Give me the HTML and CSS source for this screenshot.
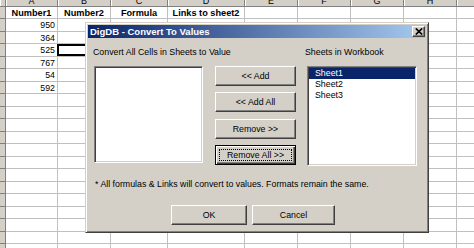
FILE: index.html
```html
<!DOCTYPE html>
<html>
<head>
<meta charset="utf-8">
<link rel="stylesheet" href="styles.css">
</head>
<body>
<div class="sheet">
  <div class="row hdr"><b class="rh"></b><b>A</b><b>B</b><b>C</b><b>D</b><b>E</b><b>F</b><b>G</b><b>H</b><b>I</b></div>
  <div class="row"><b class="rh"></b><span class="th">Number1</span><span class="th">Number2</span><span class="th">Formula</span><span class="th">Links to sheet2</span><span></span><span></span><span></span><span></span><span></span></div>
  <div class="row"><b class="rh"></b><span class="num">950</span><span></span><span></span><span></span><span></span><span></span><span></span><span></span><span></span></div>
  <div class="row"><b class="rh"></b><span class="num">364</span><span></span><span></span><span></span><span></span><span></span><span></span><span></span><span></span></div>
  <div class="row"><b class="rh"></b><span class="num">525</span><span class="active"></span><span></span><span></span><span></span><span></span><span></span><span></span><span></span></div>
  <div class="row"><b class="rh"></b><span class="num">767</span><span></span><span></span><span></span><span></span><span></span><span></span><span></span><span></span></div>
  <div class="row"><b class="rh"></b><span class="num">54</span><span></span><span></span><span></span><span></span><span></span><span></span><span></span><span></span></div>
  <div class="row"><b class="rh"></b><span class="num">592</span><span></span><span></span><span></span><span></span><span></span><span></span><span></span><span></span></div>
  <div class="row"><b class="rh"></b><span></span><span></span><span></span><span></span><span></span><span></span><span></span><span></span><span></span></div>
  <div class="row"><b class="rh"></b><span></span><span></span><span></span><span></span><span></span><span></span><span></span><span></span><span></span></div>
  <div class="row"><b class="rh"></b><span></span><span></span><span></span><span></span><span></span><span></span><span></span><span></span><span></span></div>
  <div class="row"><b class="rh"></b><span></span><span></span><span></span><span></span><span></span><span></span><span></span><span></span><span></span></div>
  <div class="row"><b class="rh"></b><span></span><span></span><span></span><span></span><span></span><span></span><span></span><span></span><span></span></div>
  <div class="row"><b class="rh"></b><span></span><span></span><span></span><span></span><span></span><span></span><span></span><span></span><span></span></div>
  <div class="row"><b class="rh"></b><span></span><span></span><span></span><span></span><span></span><span></span><span></span><span></span><span></span></div>
  <div class="row"><b class="rh"></b><span></span><span></span><span></span><span></span><span></span><span></span><span></span><span></span><span></span></div>
  <div class="row"><b class="rh"></b><span></span><span></span><span></span><span></span><span></span><span></span><span></span><span></span><span></span></div>
  <div class="row"><b class="rh"></b><span></span><span></span><span></span><span></span><span></span><span></span><span></span><span></span><span></span></div>
  <div class="row"><b class="rh"></b><span></span><span></span><span></span><span></span><span></span><span></span><span></span><span></span><span></span></div>
  <div class="row"><b class="rh"></b><span></span><span></span><span></span><span></span><span></span><span></span><span></span><span></span><span></span></div>
  <div class="row"><b class="rh"></b><span></span><span></span><span></span><span></span><span></span><span></span><span></span><span></span><span></span></div>
</div>

<div class="dialog">
  <div class="titlebar">
    <span class="title">DigDB - Convert To Values</span>
    <span class="close"><svg width="8" height="7" viewBox="0 0 8 7"><path d="M0.8 0.5 L7.2 6.5 M7.2 0.5 L0.8 6.5" stroke="#000" stroke-width="1.7" fill="none"/></svg></span>
  </div>
  <div class="body">
    <div class="columns">
      <div class="col-left">
        <div class="label">Convert All Cells in Sheets to Value</div>
        <div class="listbox list-left"></div>
      </div>
      <div class="col-mid">
        <div class="btn">&lt;&lt; Add</div>
        <div class="btn">&lt;&lt; Add All</div>
        <div class="btn">Remove &gt;&gt;</div>
        <div class="btn focus"><span class="focus-rect">Remove All &gt;&gt;</span></div>
      </div>
      <div class="col-right">
        <div class="label">Sheets in Workbook</div>
        <div class="listbox list-right">
          <div class="item selected">Sheet1</div>
          <div class="item">Sheet2</div>
          <div class="item">Sheet3</div>
        </div>
      </div>
    </div>
    <div class="note">* All formulas &amp; Links will convert to values. Formats remain the same.</div>
    <div class="actions">
      <div class="btn btn-ok">OK</div>
      <div class="btn btn-cancel">Cancel</div>
    </div>
  </div>
</div>
</body>
</html>
```

FILE: styles.css
```css
html, body {
  margin: 0;
  padding: 0;
  width: 474px;
  height: 248px;
  overflow: hidden;
  background: #ffffff;
  font-family: "Liberation Sans", Arial, sans-serif;
  color: #000;
}

.sheet {
  position: relative;
  width: 474px;
  height: 248px;
  overflow: hidden;
}

.row {
  display: grid;
  grid-template-columns: 6px 52px 53px 57px 77px 53px 53px 53px 53px 60px;
  height: 12.5px;
}

.row > span {
  box-sizing: border-box;
  border-right: 1px solid #c0c0c0;
  border-bottom: 1px solid #c0c0c0;
  font-size: 8.8px;
  line-height: 12px;
  white-space: nowrap;
  overflow: hidden;
}

.row > .rh {
  box-sizing: border-box;
  background: #d4d0c8;
  border-right: 1px solid #808080;
  border-bottom: 1px solid #808080;
}

.hdr {
  height: 6.5px;
}

.hdr > b {
  box-sizing: border-box;
  background: #d4d0c8;
  border-right: 1px solid #808080;
  border-bottom: 1px solid #808080;
  box-shadow: inset 1px 0 #ffffff;
  font-weight: normal;
  font-size: 9px;
  line-height: 9px;
  text-align: center;
  overflow: hidden;
  padding-top: 0;
}

.hdr > b:not(.rh) {
  line-height: 2px;
}

.th {
  font-weight: bold;
  font-size: 9.2px !important;
  text-align: center;
}

.num {
  text-align: right;
  padding-right: 2px;
}

.active {
  box-shadow: inset 0 0 0 2px #000;
  margin-left: -1px;
}

/* Dialog */
.dialog {
  position: absolute;
  left: 85px;
  top: 22px;
  width: 344px;
  height: 211px;
  box-sizing: border-box;
  background: #d4d0c8;
  border: 1px solid;
  border-color: #d4d0c8 #404040 #404040 #d4d0c8;
  box-shadow: inset 1px 1px #ffffff, inset -1px -1px #808080;
  padding: 2px;
  display: flex;
  flex-direction: column;
}

.titlebar {
  height: 13px;
  background: linear-gradient(to right, #0a246a, #a6caf0);
  display: flex;
  align-items: center;
  justify-content: space-between;
  padding: 0 1px 0 2px;
}

.title {
  color: #ffffff;
  font-weight: bold;
  font-size: 9.5px;
  line-height: 13px;
  white-space: nowrap;
}

.close {
  width: 13px;
  height: 11px;
  box-sizing: border-box;
  background: #d4d0c8;
  border: 1px solid;
  border-color: #ffffff #404040 #404040 #ffffff;
  box-shadow: inset -1px -1px #808080;
  display: flex;
  align-items: center;
  justify-content: center;
}

.close svg {
  display: block;
}

.body {
  padding: 8.5px 0 0 5px;
  font-size: 8.8px;
}

.columns {
  display: flex;
  align-items: flex-start;
}

.col-left {
  width: 111px;
  margin-right: 11px;
}

.col-mid {
  width: 81px;
  margin-right: 9px;
  padding-top: 19.5px;
  display: flex;
  flex-direction: column;
  gap: 6.33px;
}

.col-right {
  width: 112px;
}

.label {
  line-height: 11px;
  height: 11px;
  margin-bottom: 8.5px;
  white-space: nowrap;
}

.listbox {
  box-sizing: border-box;
  background: #ffffff;
  border: 1px solid;
  border-color: #808080 #ffffff #ffffff #808080;
  box-shadow: inset 1px 1px #404040, inset -1px -1px #d4d0c8;
  padding: 1px;
}

.list-left {
  margin-left: 1px;
  width: 109px;
  height: 97px;
}

.list-right {
  margin-left: 2px;
  width: 110px;
  height: 100px;
}

.item {
  line-height: 11px;
  height: 11px;
  padding-left: 6px;
  white-space: nowrap;
}

.item.selected {
  background: #0a246a;
  color: #ffffff;
}

.btn {
  box-sizing: border-box;
  height: 20px;
  background: #d4d0c8;
  border: 1px solid;
  border-color: #ffffff #404040 #404040 #ffffff;
  box-shadow: inset -1px -1px #808080;
  display: flex;
  align-items: center;
  justify-content: center;
  font-size: 8.8px;
  white-space: nowrap;
}

.btn.focus {
  border-color: #000000;
  box-shadow: inset 1px 1px #ffffff, inset -1px -1px #404040, inset -2px -2px #808080;
  padding: 3px;
  align-items: stretch;
}

.focus-rect {
  flex: 1;
  border: 1px dotted #000;
  display: flex;
  align-items: center;
  justify-content: center;
}

.note {
  margin: 12.5px 0 0 2px;
  line-height: 11px;
  white-space: nowrap;
}

.actions {
  display: flex;
  gap: 5px;
  margin-top: 15.5px;
  padding-left: 78px;
}

.btn-ok {
  width: 76px;
}

.btn-cancel {
  width: 83px;
}
```
